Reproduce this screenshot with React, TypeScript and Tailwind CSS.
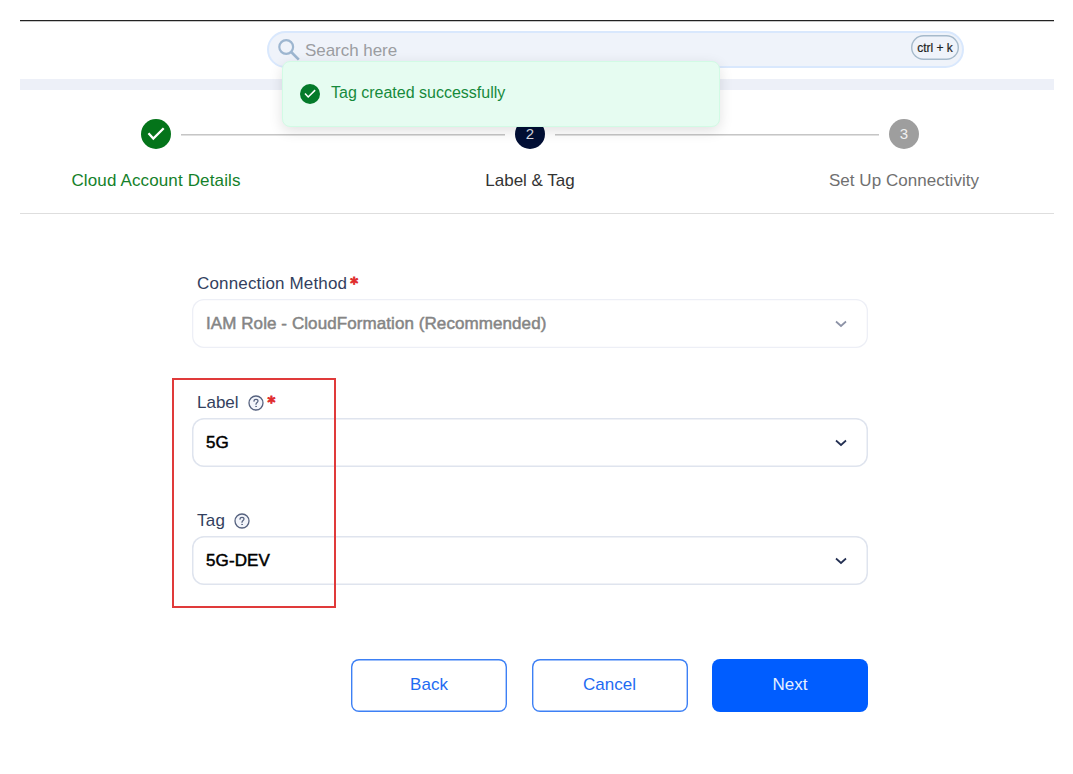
import React from "react";

function Tick({ className }: { className: string }) {
  return (
    <svg viewBox="0 0 30 30" className={className} fill="none">
      <circle cx="15" cy="15" r="15" fill="currentColor" />
      <path d="M7.500 14.300 12.300 19.500 22.700 9.200" stroke="white" strokeWidth="2.300" />
    </svg>
  );
}

function Help() {
  return (
    <svg viewBox="0 0 16 16" className="h-4 w-4" fill="none" stroke="#56627f" strokeLinecap="round">
      <circle cx="8" cy="8" r="7" strokeWidth="1.300" fill="#f3f5fb" />
      <path d="M6 6.200C6 5 6.900 4.300 8 4.300s2 .7 2 1.800C10 7.500 8 7.600 8 9.300" strokeWidth="1.200" />
      <circle cx="8" cy="11.400" r=".4" strokeWidth=".8" />
    </svg>
  );
}

function Star() {
  return (
    <span className="ml-[3px] h-5 font-['DejaVu_Sans'] text-[15px] leading-[24px] font-bold text-[#e02b2b] [-webkit-text-stroke:0.8px_currentColor]">
      *
    </span>
  );
}

function Step({ label, labelClass, children }: { label: string; labelClass: string; children: React.ReactNode }) {
  return (
    <div className="flex w-[30px] shrink-0 flex-col items-center">
      {children}
      <span className={`mt-5 text-[17px] leading-6 whitespace-nowrap ${labelClass}`}>{label}</span>
    </div>
  );
}

function Connector() {
  return <div className="mx-[10px] mt-[15px] h-[2px] flex-1 border-t border-b border-t-[#c6c6c6] border-b-[#e0e0e0]" />;
}

function Select({ value, disabled = false, valueClass }: { value: string; disabled?: boolean; valueClass: string }) {
  return (
    <div
      className={`flex h-[49px] items-center justify-between rounded-xl bg-white pr-[21px] pl-[14px] ring-inset ${
        disabled ? "ring-[1.3px] ring-[#edeff6]" : "ring-[1.5px] ring-[#dfe4ee]"
      }`}
    >
      <span className={`text-[17px] leading-6 [-webkit-text-stroke:0.5px_currentColor] ${valueClass}`}>{value}</span>
      <svg viewBox="0 0 12 12" className="h-3 w-3" fill="none" stroke={disabled ? "#8c92a6" : "#232f52"} strokeWidth="1.700">
        <path d="M1 3.500 6 8l5-4.500" />
      </svg>
    </div>
  );
}

export default function App() {
  return (
    <div className="h-[774px] w-full overflow-hidden bg-white px-5 pt-5 font-['Liberation_Sans',sans-serif]">
      <div className="relative w-[1034px]">
        <header className="flex h-[59px] border-t border-[#222] pl-[247px] shadow-[inset_0_1px_0_#c8c8c8]">
          <div className="mt-[10px] flex h-[37px] w-[697px] items-center rounded-full border-2 border-[#d9e8fd] bg-[#eff3fa] pr-[3px] pl-[9px]">
            <svg viewBox="0 0 22 22" className="h-[22px] w-[22px]" fill="none" stroke="#9db6d0" strokeWidth="2.200">
              <circle cx="8.200" cy="8" r="6.900" />
              <path d="m13.200 13 7.600 7.600" strokeWidth="2.600" />
            </svg>
            <span className="mt-[2px] ml-[5px] text-[17px] tracking-[-0.05px] text-[#9b9da1]">Search here</span>
            <span className="ml-auto flex h-[25px] w-12 -translate-y-[2px] items-center justify-center rounded-full text-[12px] whitespace-nowrap text-[#222] ring-[1.4px] ring-[#a6bacb] ring-inset [-webkit-text-stroke:0.2px_currentColor]">
              ctrl + k
            </span>
          </div>
        </header>
        <div className="h-[11px] bg-[#edf0f8]" />

        <div
          role="status"
          className="absolute top-[41px] left-[262px] flex h-[66px] w-[438px] items-center rounded-lg border-[1.5px] border-[#d2fbe5] bg-[#e6fcf1] pl-[17px] text-[#168a3c] shadow-[0_4px_14px_rgba(0,0,0,0.12)]"
        >
          <Tick className="h-5 w-5 text-[#047a2a]" />
          <span className="ml-[11px] -translate-y-px text-[16px] leading-5">Tag created successfully</span>
        </div>

        <section className="flex h-[124px] border-b border-[#dedede] pt-[29px] pr-[135px] pl-[121px]">
          <Step label="Cloud Account Details" labelClass="tracking-[0.14px] text-[#14812a]">
            <Tick className="h-[30px] w-[30px] text-[#04741a]" />
          </Step>
          <Connector />
          <Step label="Label & Tag" labelClass="text-[#333]">
            <span className="flex h-[30px] w-[30px] items-center justify-center rounded-full bg-[#020f35] text-[15px] text-[#d9dbe2]">2</span>
          </Step>
          <Connector />
          <Step label="Set Up Connectivity" labelClass="tracking-[0.05px] text-[#707070]">
            <span className="flex h-[30px] w-[30px] items-center justify-center rounded-full bg-[#9e9e9e] text-[15px] text-[#f0f0f0]">3</span>
          </Step>
        </section>

        <form className="ml-[172px] w-[676px] pt-[58px] text-[17px] text-[#333f5e]">
          <div className="flex h-[27px] items-start pl-[5px] leading-6">
            <span className="tracking-[0.16px]">Connection Method</span>
            <Star />
          </div>
          <Select value="IAM Role - CloudFormation (Recommended)" disabled valueClass="tracking-[0.08px] text-[#858585]" />

          <div className="mt-[43px] flex h-[27px] items-start pl-[5px] leading-6">
            <span>Label</span>
            <span className="mt-1 mr-px ml-[9px]"><Help /></span>
            <Star />
          </div>
          <Select value="5G" valueClass="text-black" />

          <div className="mt-[42px] flex h-[27px] items-start pl-[5px] leading-6">
            <span className="tracking-[0.3px]">Tag</span>
            <span className="mt-1 ml-[9px]"><Help /></span>
          </div>
          <Select value="5G-DEV" valueClass="tracking-[0.1px] text-black" />

          <div className="mt-[74px] flex justify-end gap-[24.5px]">
            <button type="button" className="h-[53px] w-[156px] rounded-lg pb-[2px] text-[#1f6bf2] ring-[1.4px] ring-[#3d80f5] ring-inset">Back</button>
            <button type="button" className="h-[53px] w-[156px] rounded-lg pb-[2px] text-[#1f6bf2] ring-[1.4px] ring-[#3d80f5] ring-inset">Cancel</button>
            <button type="button" className="h-[53px] w-[156px] rounded-lg bg-[#005dff] pb-[2px] text-[#e6efff]">Next</button>
          </div>
        </form>

        <div className="pointer-events-none absolute top-[358px] left-[152px] h-[230px] w-[164px] border-2 border-[#e03a3a]" />
      </div>
    </div>
  );
}
